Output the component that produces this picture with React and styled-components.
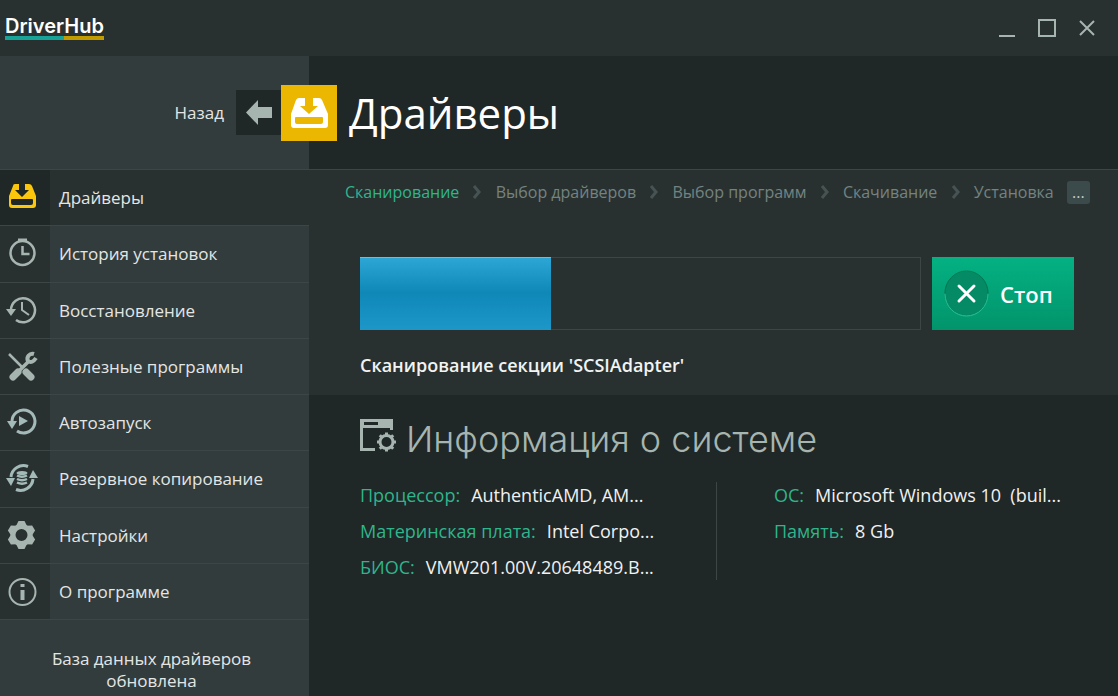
import React from "react";
import styled, { createGlobalStyle } from "styled-components";

const c = {
  bar: "#293130",
  dark: "#202727",
  panel: "#323c3c",
  line: "#3c4646",
  icon: "#a6b5af",
  text: "#e4e6e5",
  green: "#2fb58c",
};

const Global = createGlobalStyle`
  * { box-sizing: border-box; }
  body { margin: 0; background: ${c.dark}; }
  button { font: inherit; color: inherit; border: 0; padding: 0; background: none; cursor: pointer; }
  ul, ol, dl, dd, h1, h2, p { margin: 0; padding: 0; list-style: none; font-weight: 400; }
  a { color: inherit; text-decoration: none; }
`;

const Window = styled.div`
  min-height: 100vh;
  display: flex;
  flex-direction: column;
  font-family: "Open Sans", "Noto Sans", sans-serif;
  font-size: 17px;
  color: ${c.text};
  background: ${c.dark};
`;
const TitleBar = styled.header`
  height: 56px;
  flex: none;
  display: flex;
  justify-content: space-between;
  align-items: center;
  padding: 0 21px 0 5px;
  background: ${c.bar};
`;
const Logo = styled.a`
  display: flex;
  flex-direction: column;
  color: #fff;
  font: 600 20px/20px Inter, "Noto Sans", sans-serif;
`;
const LogoLine = styled.span`
  height: 4px;
  background: linear-gradient(90deg, #17a398 60%, #c29b00 60%);
`;
const WindowButtons = styled.div`
  display: flex;
  gap: 20px;
`;
const WindowButton = styled.button`
  width: 20px;
  height: 20px;
  svg { display: block; }
`;
const Hero = styled.div`
  flex: none;
  display: grid;
  grid-template-columns: 281px 1fr;
  align-items: center;
  height: 114px;
  border-bottom: 1px solid ${c.line};
  background: linear-gradient(90deg, ${c.panel} 309px, ${c.dark} 309px);
`;
const Back = styled.button`
  justify-self: end;
  display: flex;
  align-items: center;
  gap: 12px;
`;
const BackIcon = styled.span`
  width: 45px;
  height: 45px;
  background: ${c.dark};
`;
const Heading = styled.h1`
  display: flex;
  align-items: center;
  gap: 12px;
  font-size: 42px;
  line-height: 56px;
  color: #fff;
`;
const HeadingIcon = styled.span`
  width: 56px;
  height: 56px;
  background: #ebb700;
  svg { display: block; }
`;
const Body = styled.div`
  flex: 1;
  display: grid;
  grid-template-columns: 309px 1fr;
`;
const Sidebar = styled.nav`
  background: ${c.panel};
`;
const Menu = styled.ul`
  display: grid;
  grid-template-rows: repeat(8, minmax(0, 1fr));
  height: 450px;
`;
const MenuItem = styled.li`
  border-bottom: 1px solid ${c.line};
  background: ${(p) => (p.$active ? c.bar : c.panel)};
`;
const MenuLink = styled.a`
  height: 100%;
  display: flex;
  align-items: center;
  gap: 9px;
`;
const MenuIcon = styled.span`
  width: 50px;
  height: 100%;
  padding-top: 4px;
  color: ${(p) => (p.$active ? "#fcc60c" : c.icon)};
  background: ${(p) => (p.$active ? c.dark : c.bar)};
  svg { display: block; }
`;
const Status = styled.p`
  padding: 28px 40px 0 34px;
  line-height: 22px;
  text-align: center;
`;
const Main = styled.main`
  min-width: 0;
`;
const Scan = styled.section`
  height: 225px;
  background: ${c.bar};
`;
const Steps = styled.ol`
  display: flex;
  align-items: center;
  justify-content: space-between;
  height: 44px;
  padding: 0 28px 0 36px;
  font-size: 16px;
  white-space: nowrap;
`;
const Step = styled.li`
  color: ${(p) => (p.$active ? c.green : "#748381")};
`;
const Separator = styled.li`
  width: 10px;
  height: 16px;
  svg { display: block; }
`;
const More = styled.button`
  display: block;
  width: 23px;
  height: 23px;
  border-radius: 3px;
  background: #3b4a4a;
  color: #c3cccb;
  line-height: 23px;
`;
const Progress = styled.div`
  display: flex;
  gap: 11px;
  height: 73px;
  margin: 43px 44px 0 51px;
`;
const Track = styled.div`
  flex: 1;
  box-shadow: inset 0 0 0 1px ${c.line};
`;
const Fill = styled.div`
  height: 100%;
  border-top: 1px solid #5cc4ec;
  background: linear-gradient(#2ca6d5, #0f88b8 48%, #1c97c8);
`;
const Stop = styled.button`
  width: 142px;
  display: flex;
  align-items: center;
  gap: 11px;
  padding-left: 12px;
  background: linear-gradient(#04b182, #02946b);
  color: #fff;
  font-size: 22px;
  font-weight: 600;
`;
const StopIcon = styled.span`
  width: 45px;
  height: 47px;
  svg { display: block; }
`;
const Section = styled.p`
  margin: 23px 51px 0;
  font-size: 18px;
  line-height: 24px;
  font-weight: 600;
  color: #f2f3f3;
`;
const Info = styled.section`
  padding: 20px 51px;
`;
const InfoTitle = styled.h2`
  display: flex;
  align-items: center;
  gap: 9px;
  font: 300 36px/48px Inter, "Noto Sans", sans-serif;
  color: ${c.icon};
`;
const InfoColumns = styled.div`
  display: grid;
  grid-template-columns: 356px 1fr;
  margin-top: 19px;
`;
const InfoList = styled.dl`
  display: flex;
  flex-direction: column;
  gap: 10px;
  padding-left: ${(p) => (p.$divided ? "57px" : "0")};
  border-left: ${(p) => (p.$divided ? `1px solid ${c.line}` : "0")};
`;
const InfoRow = styled.div`
  display: flex;
  gap: 11px;
  line-height: 26px;
  font-size: 18px;
  white-space: pre;
  dt { color: ${c.green}; }
  dd { color: #f0f1f1; }
`;

const Drive = ({ size }) => (
  <svg width={size} height={size} viewBox="0 0 56 56" aria-hidden="true">
    <path fill="#fff" fillRule="evenodd" d="M18 13h6v8h-5l9 8 9-8h-5v-8h6q2 0 3 2l6 14v11q0 3-3 3H13q-3 0-3-3V29l5-14q1-2 3-2zM15 32q-1 0-1 1v4q0 2 2 2h24q2 0 2-2v-4q0-1-1-1z" />
  </svg>
);

const Glyph = ({ children, ...rest }) => (
  <svg width="44" height="48" viewBox="0 0 44 48" fill="none" stroke="currentColor" strokeWidth="2" aria-hidden="true" {...rest}>{children}</svg>
);
const icons = {
  drive: <Glyph><path fill="currentColor" stroke="none" fillRule="evenodd" d="M15 10h4v6h-4l7 7 7-7h-4v-6h4q2 0 3 2l4 10v9q0 3-3 3H12q-3 0-3-3v-9l4-10q0-2 2-2zM12 25q-1 0-1 1v3q0 2 2 2h18q2 0 2-2v-3q0-1-1-1z" /></Glyph>,
  timer: <Glyph strokeWidth="2.500"><circle cx="22.500" cy="23" r="12" /><path strokeWidth="3" d="M18 10h9" /><path d="M22.500 16v8h7" /></Glyph>,
  restore: <Glyph><path strokeWidth="2.500" d="M11 23a12 12 0 1 1 5 10" /><path d="M22 15v8l7 5" /><path fill="currentColor" stroke="none" d="M6 22h10l-5 7z" /></Glyph>,
  tools: (
    <Glyph>
      <path strokeWidth="2.500" d="M9 11l14 14" /><path strokeWidth="7" strokeLinecap="round" d="M26 29l5 5" />
      <path strokeWidth="7" strokeLinecap="round" d="M13 34l5-5" /><path strokeWidth="3.500" d="M18 29l10-10" />
      <path strokeWidth="4" d="M34 11a5 5 0 0 0-6 7q4 3 8-3" />
    </Glyph>
  ),
  play: <Glyph color="#a3bab9"><path strokeWidth="3" d="M12 22a11.500 11.500 0 1 1 5 10" /><path fill="currentColor" stroke="none" d="M7 22h10l-5 8zM19 17l9 5-9 5z" /></Glyph>,
  backup: (
    <Glyph color="#a3bab9">
      <path strokeWidth="3" d="M28 11.500A12.500 12.500 0 0 0 11 22M16 34.500A12.500 12.500 0 0 0 33 24" />
      <path fill="currentColor" stroke="none" d="M6 23h9l-4 8zM29 23h9l-5-8z" />
      <ellipse cx="22" cy="18" rx="5.500" ry="2" fill="currentColor" stroke="none" />
      <path strokeWidth="2.500" d="M17 20.500q5 2.500 10 0M17 24q5 2.500 10 0M17 27.500q5 2.500 10 0" />
    </Glyph>
  ),
  gear: (
    <Glyph>
      <circle cx="21.500" cy="23" r="8.500" strokeWidth="5" />
      {[0, 60, 120, 180, 240, 300].map((a) => (
        <path key={a} fill="currentColor" stroke="none" d="M16 14l2.500-5h6l2.500 5z" transform={`rotate(${a} 21.500 23)`} />
      ))}
    </Glyph>
  ),
  about: <Glyph><circle cx="22.500" cy="24" r="13" /><path strokeWidth="4" d="M22.500 16v3M22.500 22v10" /></Glyph>,
};

const menu = [
  ["drive", "Драйверы"],
  ["timer", "История установок"],
  ["restore", "Восстановление"],
  ["tools", "Полезные программы"],
  ["play", "Автозапуск"],
  ["backup", "Резервное копирование"],
  ["gear", "Настройки"],
  ["about", "О программе"],
];
const steps = ["Сканирование", "Выбор драйверов", "Выбор программ", "Скачивание", "Установка"];
const system = [
  [["Процессор:", "AuthenticAMD, AM..."], ["Материнская плата:", "Intel Corpo..."], ["БИОС:", "VMW201.00V.20648489.B..."]],
  [["ОС:", "Microsoft Windows 10  (buil..."], ["Память:", "8 Gb"]],
];
const controls = [
  ["Свернуть", "M2 18h16"],
  ["Развернуть", "M2 2h16v16H2z"],
  ["Закрыть", "M3 3l14 14M17 3L3 17"],
];
const progress = 34;

export default function App() {
  return (
    <Window>
      <Global />
      <TitleBar>
        <Logo href="#">DriverHub<LogoLine /></Logo>
        <WindowButtons>
          {controls.map(([label, d]) => (
            <WindowButton key={label} aria-label={label}>
              <svg width="20" height="20" fill="none" stroke={c.icon} strokeWidth="2"><path d={d} /></svg>
            </WindowButton>
          ))}
        </WindowButtons>
      </TitleBar>
      <Hero>
        <Back>
          Назад
          <BackIcon>
            <svg width="45" height="45" aria-hidden="true"><path fill={c.icon} d="M10 22.500L22 10v7h14v11H22v7z" /></svg>
          </BackIcon>
        </Back>
        <Heading><HeadingIcon><Drive size={56} /></HeadingIcon>Драйверы</Heading>
      </Hero>
      <Body>
        <Sidebar>
          <Menu>
            {menu.map(([icon, label], i) => (
              <MenuItem key={icon} $active={i === 0}>
                <MenuLink href="#"><MenuIcon $active={i === 0}>{icons[icon]}</MenuIcon>{label}</MenuLink>
              </MenuItem>
            ))}
          </Menu>
          <Status>База данных драйверов обновлена</Status>
        </Sidebar>
        <Main>
          <Scan>
            <Steps>
              {steps.map((s, i) => (
                <React.Fragment key={s}>
                  {i > 0 && <Separator aria-hidden="true"><svg width="10" height="16" fill="none" stroke="#465353" strokeWidth="3"><path d="M2 2l5 6-5 6" /></svg></Separator>}
                  <Step $active={i === 0}>{s}</Step>
                </React.Fragment>
              ))}
              <li><More>...</More></li>
            </Steps>
            <Progress>
              <Track role="progressbar" aria-valuenow={progress} aria-label="Сканирование"><Fill style={{ width: `${progress}%` }} /></Track>
              <Stop>
                <StopIcon>
                  <svg width="45" height="47" fill="none" aria-hidden="true">
                    <circle cx="22.500" cy="23.500" r="22" fill="#048a64" />
                    <path stroke="#037753" d="M1 23a21.500 22 0 0 1 43 0" />
                    <path stroke="#2bbd93" d="M1 24a21.500 22 0 0 0 43 0" />
                    <path stroke="#fff" strokeWidth="3" strokeLinecap="round" d="M15 16l15 15M30 16L15 31" />
                  </svg>
                </StopIcon>
                Стоп
              </Stop>
            </Progress>
            <Section>Сканирование секции 'SCSIAdapter'</Section>
          </Scan>
          <Info>
            <InfoTitle>
              <svg width="37" height="42" fill="none" stroke={c.icon} aria-hidden="true">
                <path strokeWidth="3" d="M15 31.500H1.500V5M31.500 8v4" />
                <path fill={c.icon} stroke="none" fillRule="evenodd" d="M0 1h33v9H0zM4 4v3h14V4z" />
                <circle cx="26.500" cy="24" r="6.500" strokeWidth="3" />
                {[0, 45, 90, 135, 180, 225, 270, 315].map((a) => (
                  <path key={a} strokeWidth="3" d="M26.500 17v-2.500" transform={`rotate(${a} 26.500 24)`} />
                ))}
              </svg>
              Информация о системе
            </InfoTitle>
            <InfoColumns>
              {system.map((rows, i) => (
                <InfoList key={i} $divided={i > 0}>
                  {rows.map(([k, v]) => <InfoRow key={k}><dt>{k}</dt><dd>{v}</dd></InfoRow>)}
                </InfoList>
              ))}
            </InfoColumns>
          </Info>
        </Main>
      </Body>
    </Window>
  );
}
